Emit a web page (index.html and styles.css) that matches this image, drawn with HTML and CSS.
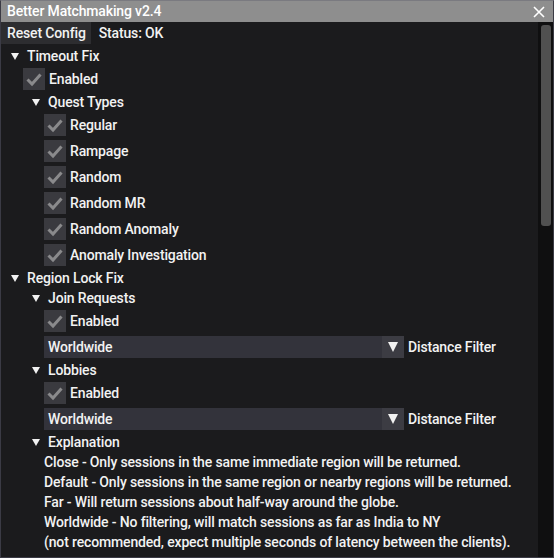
FILE: index.html
```html
<!DOCTYPE html>
<html lang="en">
<head>
<meta charset="utf-8">
<title>Better Matchmaking v2.4</title>
<link rel="stylesheet" href="styles.css">
</head>
<body>
<div class="window">
  <div class="titlebar">
    <span class="title">Better Matchmaking v2.4</span>
    <svg class="close" width="12" height="12" viewBox="0 0 12 12"><path d="M1 1 L11 11 M11 1 L1 11" stroke="#fff" stroke-width="1.6" fill="none"/></svg>
  </div>
  <div class="frame">
    <div class="main">
      <div class="menubar">
        <span class="menu-btn">Reset Config</span>
        <span class="menu-text">Status: OK</span>
      </div>
      <div class="content">
        <div class="node">
          <div class="node-head"><span class="arrow"></span>Timeout Fix</div>
          <div class="children">
            <div class="check-row"><span class="box"><svg viewBox="0 0 22 22"><path d="M4.5 11.5 L9 16 L17.5 6.5" /></svg></span>Enabled</div>
            <div class="node">
              <div class="node-head"><span class="arrow"></span>Quest Types</div>
              <div class="children">
                <div class="check-row"><span class="box"><svg viewBox="0 0 22 22"><path d="M4.5 11.5 L9 16 L17.5 6.5" /></svg></span>Regular</div>
                <div class="check-row"><span class="box"><svg viewBox="0 0 22 22"><path d="M4.5 11.5 L9 16 L17.5 6.5" /></svg></span>Rampage</div>
                <div class="check-row"><span class="box"><svg viewBox="0 0 22 22"><path d="M4.5 11.5 L9 16 L17.5 6.5" /></svg></span>Random</div>
                <div class="check-row"><span class="box"><svg viewBox="0 0 22 22"><path d="M4.5 11.5 L9 16 L17.5 6.5" /></svg></span>Random MR</div>
                <div class="check-row"><span class="box"><svg viewBox="0 0 22 22"><path d="M4.5 11.5 L9 16 L17.5 6.5" /></svg></span>Random Anomaly</div>
                <div class="check-row"><span class="box"><svg viewBox="0 0 22 22"><path d="M4.5 11.5 L9 16 L17.5 6.5" /></svg></span>Anomaly Investigation</div>
              </div>
            </div>
          </div>
        </div>
        <div class="node">
          <div class="node-head"><span class="arrow"></span>Region Lock Fix</div>
          <div class="children">
            <div class="node">
              <div class="node-head"><span class="arrow"></span>Join Requests</div>
              <div class="children">
                <div class="check-row"><span class="box"><svg viewBox="0 0 22 22"><path d="M4.5 11.5 L9 16 L17.5 6.5" /></svg></span>Enabled</div>
                <div class="combo-row">
                  <div class="combo"><span class="combo-value">Worldwide</span><span class="combo-btn"><span class="combo-arrow"></span></span></div>
                  <span>Distance Filter</span>
                </div>
              </div>
            </div>
            <div class="node">
              <div class="node-head"><span class="arrow"></span>Lobbies</div>
              <div class="children">
                <div class="check-row"><span class="box"><svg viewBox="0 0 22 22"><path d="M4.5 11.5 L9 16 L17.5 6.5" /></svg></span>Enabled</div>
                <div class="combo-row">
                  <div class="combo"><span class="combo-value">Worldwide</span><span class="combo-btn"><span class="combo-arrow"></span></span></div>
                  <span>Distance Filter</span>
                </div>
              </div>
            </div>
            <div class="node">
              <div class="node-head"><span class="arrow"></span>Explanation</div>
              <div class="children">
                <div class="line">Close - Only sessions in the same immediate region will be returned.</div>
                <div class="line">Default - Only sessions in the same region or nearby regions will be returned.</div>
                <div class="line">Far - Will return sessions about half-way around the globe.</div>
                <div class="line">Worldwide - No filtering, will match sessions as far as India to NY</div>
                <div class="line">(not recommended, expect multiple seconds of latency between the clients).</div>
              </div>
            </div>
          </div>
        </div>
      </div>
    </div>
    <div class="scrollbar"><div class="thumb"></div></div>
  </div>
</div>
</body>
</html>
```

FILE: styles.css
```css
html, body {
  margin: 0;
  padding: 0;
  background: #1b1b1d;
}

body {
  font-family: Roboto, "Liberation Sans", sans-serif;
  font-weight: 500;
  font-size: 14px;
  letter-spacing: -0.15px;
  color: #f2f2f2;
}

.window {
  box-sizing: border-box;
  width: 554px;
  height: 558px;
  border: 1px solid #3b3b45;
  border-top-color: #7a7a80;
  display: flex;
  flex-direction: column;
  background: #1b1b1d;
  overflow: hidden;
}

/* title bar */
.titlebar {
  height: 21px;
  flex: none;
  background: #8e8e8e;
  display: flex;
  align-items: center;
  justify-content: space-between;
  padding: 0 8px 0 6px;
  color: #fff;
}

.title {
  line-height: 21px;
}

.close {
  display: block;
  margin-top: 1px;
}

/* window body */
.frame {
  flex: 1;
  display: flex;
  min-height: 0;
}

.main {
  flex: 1;
  min-width: 0;
  overflow: hidden;
}

.menubar {
  height: 22px;
  display: flex;
  align-items: center;
  gap: 8px;
}

.menu-btn {
  height: 22px;
  line-height: 22px;
  padding: 0 5px 0 6px;
  background: #2d2d30;
}

.content {
  padding: 4px 0 0 1px;
  display: flex;
  flex-direction: column;
  gap: 4px;
}

/* tree */
.node {
  display: flex;
  flex-direction: column;
  gap: 4px;
}

.node-head {
  height: 16px;
  line-height: 16px;
  display: flex;
  align-items: center;
  white-space: nowrap;
}

.arrow {
  width: 0;
  height: 0;
  margin-left: 9px;
  margin-right: 8px;
  border-left: 4px solid transparent;
  border-right: 4px solid transparent;
  border-top: 7px solid #f2f2f2;
}

.children {
  display: flex;
  flex-direction: column;
  gap: 4px;
  padding-left: 21px;
}

/* checkbox */
.check-row {
  height: 22px;
  display: flex;
  align-items: center;
  gap: 4px;
  white-space: nowrap;
}

.box {
  width: 22px;
  height: 22px;
  background: #3a3a3f;
  display: block;
}

.box svg {
  display: block;
  width: 22px;
  height: 22px;
}

.box path {
  fill: none;
  stroke: #8a8a8c;
  stroke-width: 3;
}

/* combo */
.combo-row {
  height: 22px;
  display: flex;
  align-items: center;
  gap: 4px;
  white-space: nowrap;
}

.combo {
  width: 360px;
  height: 22px;
  display: flex;
  background: #33333b;
}

.combo-value {
  flex: 1;
  line-height: 22px;
  padding-left: 4px;
}

.combo-btn {
  width: 22px;
  height: 22px;
  background: #3c3c43;
  display: flex;
  align-items: center;
  justify-content: center;
}

.combo-arrow {
  width: 0;
  height: 0;
  border-left: 5.5px solid transparent;
  border-right: 5.5px solid transparent;
  border-top: 10px solid #f2f2f2;
}

/* text lines */
.line {
  height: 16px;
  line-height: 16px;
  white-space: nowrap;
}

/* scrollbar */
.scrollbar {
  width: 15px;
  flex: none;
  background: #0f0f10;
  padding: 3px 2px 0 3px;
  box-sizing: border-box;
}

.thumb {
  height: 201px;
  background: #505050;
  border-radius: 3px;
}
```
